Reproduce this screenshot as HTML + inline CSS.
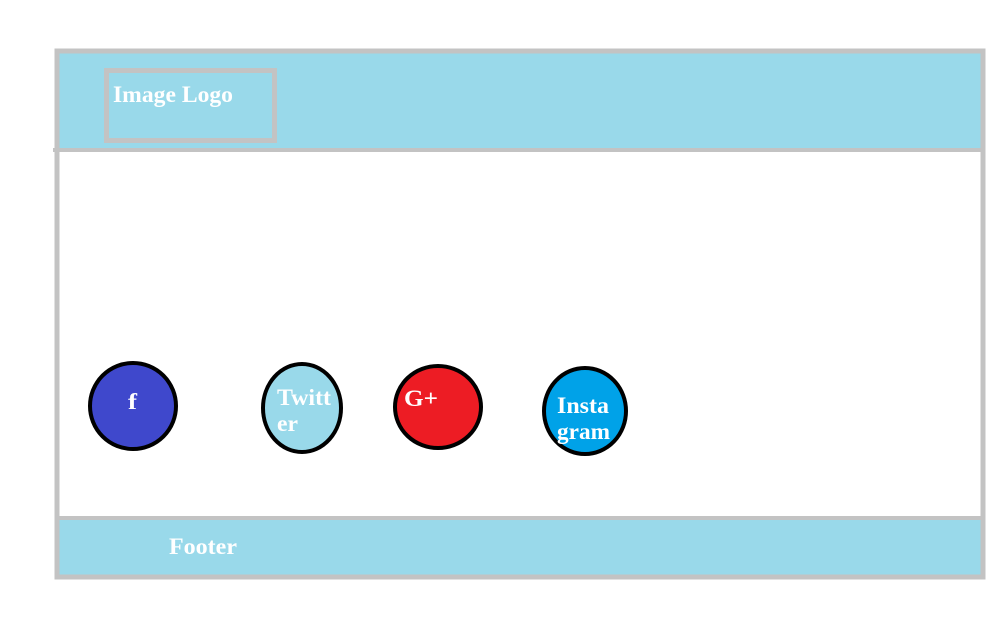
<!DOCTYPE html>
<html><head><style>body{margin:0;background:#fff}svg{display:block}</style></head><body>
<svg width="1000" height="633" xmlns="http://www.w3.org/2000/svg" font-family="Liberation Serif, serif" font-weight="bold" fill="#fff">
<rect x="0" y="0" width="1000" height="633" fill="#fff"/>
<rect x="57" y="51" width="926" height="99" fill="#99d9ea"/>
<rect x="57" y="519" width="926" height="58" fill="#99d9ea"/>
<rect x="57" y="51" width="926" height="526" fill="none" stroke="#c3c3c3" stroke-width="5"/>
<line x1="53" y1="150" x2="983" y2="150" stroke="#c3c3c3" stroke-width="4"/>
<line x1="57" y1="518" x2="983" y2="518" stroke="#c3c3c3" stroke-width="4"/>
<rect x="106.5" y="70.5" width="168" height="70" fill="none" stroke="#c3c3c3" stroke-width="5"/>
<g font-size="23">
<text x="113" y="102" textLength="120" lengthAdjust="spacingAndGlyphs">Image Logo</text>
<text x="169" y="554" textLength="68" lengthAdjust="spacingAndGlyphs">Footer</text>
</g>
<ellipse cx="133" cy="406" rx="43" ry="43" fill="#3f48cc" stroke="#000" stroke-width="4"/>
<ellipse cx="302" cy="408" rx="39" ry="44" fill="#99d9ea" stroke="#000" stroke-width="4"/>
<ellipse cx="438" cy="407" rx="43" ry="41" fill="#ed1c24" stroke="#000" stroke-width="4"/>
<ellipse cx="585" cy="411" rx="41" ry="43" fill="#00a2e8" stroke="#000" stroke-width="4"/>
<g font-size="23">
<text x="128" y="409" textLength="9" lengthAdjust="spacingAndGlyphs">f</text>
<text x="277" y="405" textLength="54" lengthAdjust="spacingAndGlyphs">Twitt</text>
<text x="277" y="431" textLength="21" lengthAdjust="spacingAndGlyphs">er</text>
<text x="404" y="406" textLength="34" lengthAdjust="spacingAndGlyphs">G+</text>
<text x="557" y="413" textLength="52" lengthAdjust="spacingAndGlyphs">Insta</text>
<text x="557" y="439" textLength="53" lengthAdjust="spacingAndGlyphs">gram</text>
</g>
</svg>
</body></html>
